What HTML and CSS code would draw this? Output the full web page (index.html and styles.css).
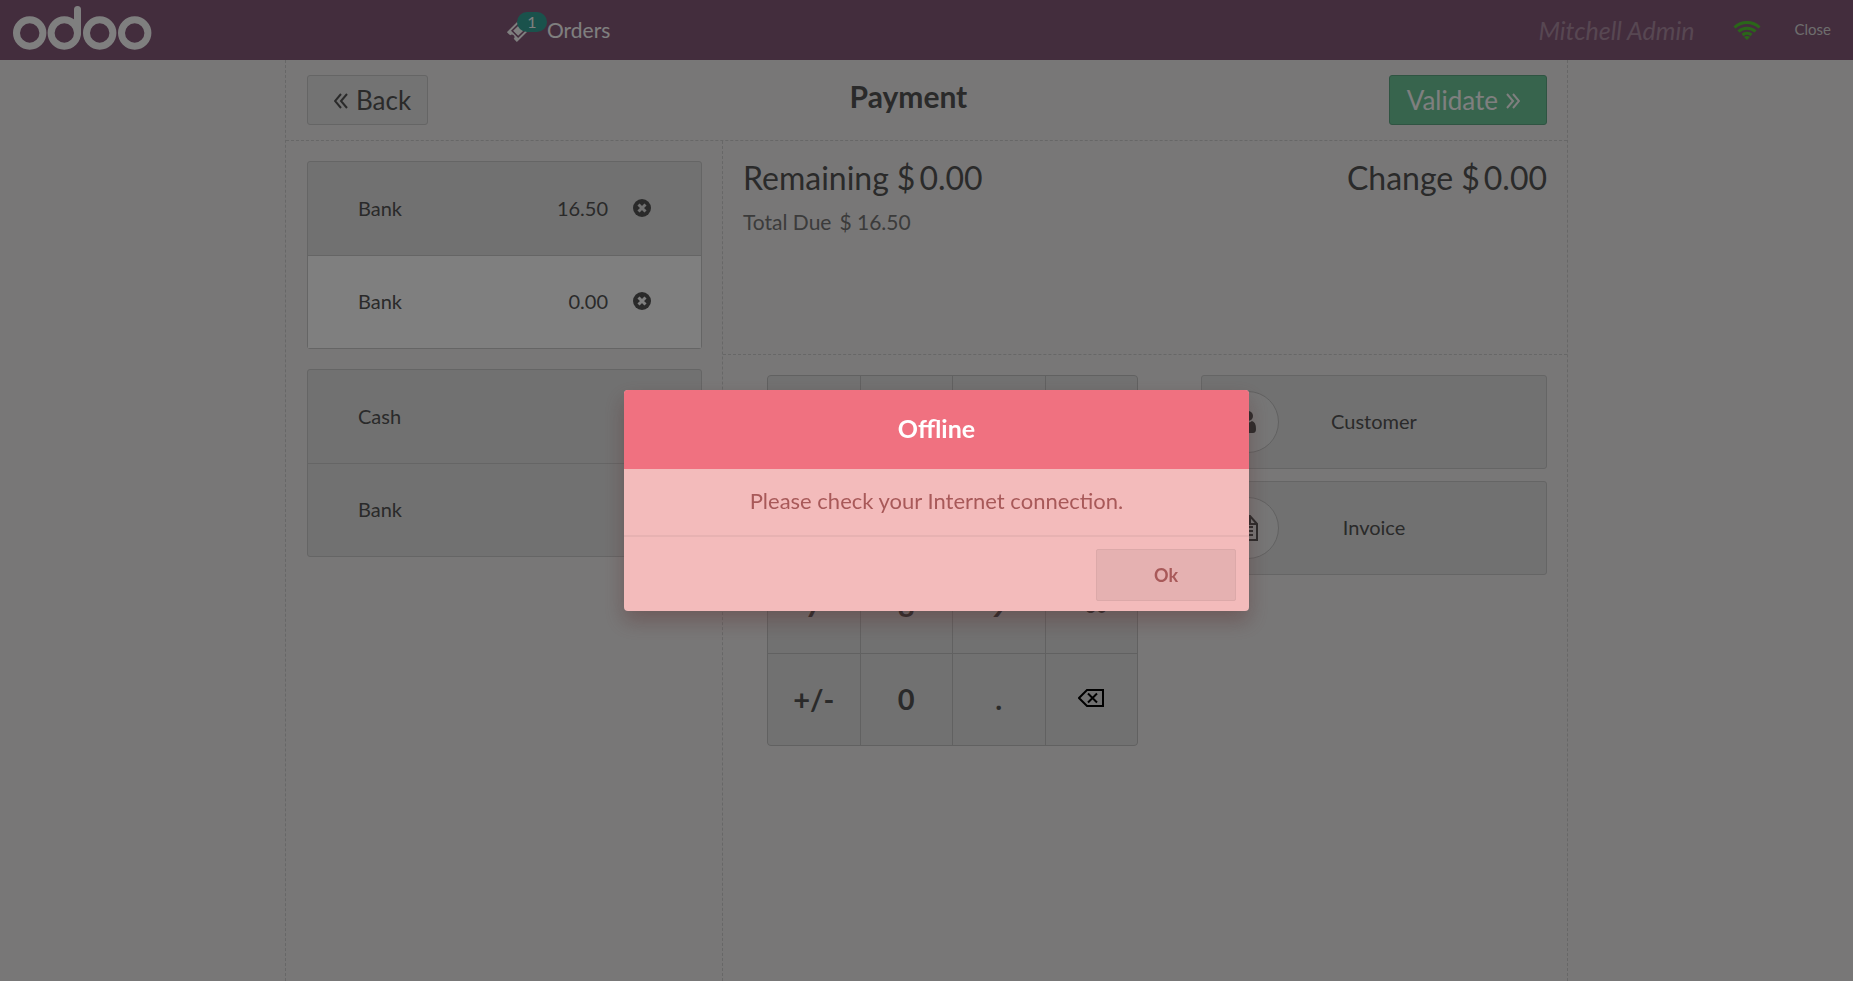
FILE: index.html
```html
<!DOCTYPE html>
<html lang="en">
<head>
<meta charset="utf-8">
<title>Payment</title>
<link rel="stylesheet" href="styles.css">
</head>
<body>
<div class="pos">
  <header class="topbar">
    <div class="brand">
      <svg class="logo" viewBox="0 0 140 48" role="img" aria-label="odoo">
        <g fill="none" stroke="#fff" stroke-width="7">
          <circle cx="17.700" cy="27" r="13.200"/>
          <circle cx="52.300" cy="27" r="13.200"/>
          <circle cx="87.700" cy="27" r="13.200"/>
          <circle cx="122.700" cy="27" r="13.200"/>
          <path d="M65.500 3.500V27" stroke-linecap="round"/>
        </g>
      </svg>
    </div>
    <button class="orders" type="button">
      <span class="ticket">
        <svg viewBox="0 0 24 24" width="24" height="24" aria-hidden="true">
          <g transform="rotate(-45 12 12)">
            <path fill="#fff" d="M2 5h20v4.500a2.500 2.500 0 0 0 0 5V19H2v-4.500a2.500 2.500 0 0 0 0-5z"/>
            <path fill="none" stroke="#875a7b" stroke-width="1.500" d="M6.500 7.700h11v8.600h-11z"/>
          </g>
        </svg>
        <span class="count">1</span>
      </span>
      <span>Orders</span>
    </button>
    <div class="status">
      <span class="cashier">Mitchell Admin</span>
      <svg class="wifi" viewBox="0 0 28 20" width="28" height="20" role="img" aria-label="Connected">
        <g fill="none" stroke="#5c3" stroke-width="3">
          <path d="M1.500 7.500a18 18 0 0 1 25 0"/>
          <path d="M5.500 11.500a12.500 12.500 0 0 1 17 0"/>
          <path d="M9.500 15a7 7 0 0 1 9 0"/>
        </g>
        <path fill="#5c3" d="M14 20l-3-3q3-2 6 0z"/>
      </svg>
      <button class="close" type="button">Close</button>
    </div>
  </header>

  <main class="payment">
    <div class="heading">
      <button class="nav back" type="button">
        <svg viewBox="0 0 14 16" width="14" height="16" aria-hidden="true"><path d="M7 1L1 8l6 7M13 1L7 8l6 7"/></svg>
        Back
      </button>
      <h1>Payment</h1>
      <button class="nav validate" type="button">
        Validate
        <svg viewBox="0 0 14 16" width="14" height="16" aria-hidden="true"><path d="M1 1l6 7-6 7M7 1l6 7-6 7"/></svg>
      </button>
    </div>
    <div class="columns">
      <section class="left" aria-label="Payment lines">
        <ul class="list">
          <li class="row">
            <span>Bank</span><span class="amount">16.50</span>
            <button class="remove" type="button" aria-label="Remove line">
              <svg viewBox="0 0 18 18" width="18" height="18"><circle cx="9" cy="9" r="9" fill="#555"/><path d="M5.500 5.500l7 7M12.500 5.500l-7 7" stroke="#e2e2e2" stroke-width="3"/></svg>
            </button>
          </li>
          <li class="row selected">
            <span>Bank</span><span class="amount">0.00</span>
            <button class="remove" type="button" aria-label="Remove line">
              <svg viewBox="0 0 18 18" width="18" height="18"><circle cx="9" cy="9" r="9" fill="#555"/><path d="M5.500 5.500l7 7M12.500 5.500l-7 7" stroke="#fff" stroke-width="3"/></svg>
            </button>
          </li>
        </ul>
        <div class="list">
          <button class="row" type="button">Cash</button>
          <button class="row" type="button">Bank</button>
        </div>
      </section>
      <section class="right" aria-label="Payment details">
        <div class="totals">
          <div>
            <div class="big"><span>Remaining</span><span class="money"><span>$</span><span>0.00</span></span></div>
            <div class="due"><span>Total Due</span><span>$ 16.50</span></div>
          </div>
          <div class="big"><span>Change</span><span class="money"><span>$</span><span>0.00</span></span></div>
        </div>
        <div class="controls">
          <div class="numpad">
            <button type="button">1</button><button type="button">2</button><button type="button">3</button><button class="mode" type="button">+10</button>
            <button type="button">4</button><button type="button">5</button><button type="button">6</button><button class="mode" type="button">+20</button>
            <button type="button">7</button><button type="button">8</button><button type="button">9</button><button class="mode" type="button">+50</button>
            <button type="button">+/-</button><button type="button">0</button><button type="button">.</button>
            <button type="button" aria-label="Backspace">
              <svg viewBox="0 0 26 18" width="26" height="18"><path fill="none" stroke="#000" stroke-width="2" d="M1 9l8-8h16v16H9zM10 4.500l9 9M19 4.500l-9 9"/></svg>
            </button>
          </div>
          <div class="options">
            <button class="option" type="button">
              <span class="disc"><svg viewBox="0 0 16 22" width="16" height="22"><circle cx="8" cy="5" r="5" fill="#555"/><path fill="#555" d="M4 10q4 3 8 0 4 1 4 8 0 4-3 4H3q-3 0-3-4 0-7 4-8z"/></svg></span>
              <span class="caption">Customer</span>
            </button>
            <button class="option" type="button">
              <span class="disc"><svg viewBox="0 0 20 26" width="20" height="26" fill="none" stroke="#555" stroke-width="2"><path d="M1 1h11l7 8v16H1zM12 1v8h7M5 12h10M5 16h10M5 20h10"/></svg></span>
              <span class="caption">Invoice</span>
            </button>
          </div>
        </div>
      </section>
    </div>
  </main>
</div>

<div class="overlay">
  <div class="popup" role="alertdialog" aria-labelledby="popup-title" aria-describedby="popup-text">
    <h2 id="popup-title">Offline</h2>
    <p id="popup-text">Please check your Internet connection.</p>
    <footer><button type="button">Ok</button></footer>
  </div>
</div>
</body>
</html>
```
FILE: styles.css
```css
* { box-sizing: border-box; }

body {
  margin: 0;
  font-family: Lato, "Open Sans", sans-serif;
  font-size: 20px;
  color: #555;
  background: #f0eeee;
}

button {
  font: inherit;
  color: inherit;
  background: none;
  border: 0;
  padding: 0;
  cursor: pointer;
}

svg { display: block; flex: none; }

.pos {
  display: flex;
  flex-direction: column;
  min-height: 100vh;
}

.topbar {
  display: grid;
  grid-template-columns: 507px auto 1fr;
  align-items: center;
  height: 60px;
  background: #875a7b;
  color: #fff;
}

.brand { padding-left: 12px; }
.logo { width: 140px; height: 48px; }

.orders {
  display: flex;
  align-items: center;
  gap: 16px;
  font-size: 21px;
  line-height: 24px;
}

.ticket { position: relative; }

.count {
  position: absolute;
  top: -6px;
  left: 10px;
  width: 30px;
  height: 20px;
  border-radius: 10px;
  background: #35a599;
  font-size: 16px;
  line-height: 20px;
}

.status {
  display: flex;
  align-items: center;
  justify-content: flex-end;
  padding-right: 22px;
}

.cashier {
  margin-right: 38px;
  font-size: 25px;
  font-style: italic;
  color: #af8fa5;
}

.wifi { margin-right: 34px; }

.close {
  padding-bottom: 2px;
  font-size: 15px;
  color: #dcdcdc;
}

.payment {
  flex: 1;
  display: flex;
  flex-direction: column;
  width: 100%;
  max-width: 1283px;
  margin: 0 auto;
  border: dashed #cecece;
  border-width: 0 1px;
}

.heading {
  display: flex;
  align-items: center;
  justify-content: space-between;
  height: 81px;
  padding: 0 20px 0 21px;
  border-bottom: 1px dashed #cecece;
}

.heading h1 {
  margin: 0 0 8px;
  font-size: 30px;
  line-height: 36px;
}

.nav {
  display: flex;
  align-items: center;
  gap: 8px;
  height: 50px;
  border: 1px solid #cacaca;
  border-radius: 3px;
  background: #e6e6e6;
  font-size: 26px;
}

.nav svg {
  margin-top: 2px;
  fill: none;
  stroke: currentColor;
  stroke-width: 2;
}

.back { padding: 0 16px 0 26px; }

.validate {
  padding: 0 26px 0 17px;
  border-color: #5fa885;
  background: #6ec89b;
  color: #fff;
}

.columns {
  flex: 1;
  display: grid;
  grid-template-columns: 436px 1fr;
}

.left {
  display: flex;
  flex-direction: column;
  gap: 20px;
  padding: 20px 20px 20px 21px;
}

.list {
  display: flex;
  flex-direction: column;
  margin: 0;
  padding: 0;
  list-style: none;
  border: 1px solid #cacaca;
  border-radius: 3px;
  background: #e2e2e2;
}

.row {
  display: flex;
  align-items: center;
  height: 93px;
  padding: 0 50px 2px;
}

.row + .row { border-top: 1px solid #cacaca; }
.selected { background: #fff; }
.amount { margin-left: auto; }
.remove { margin-left: 25px; }

.right { border-left: 1px dashed #cecece; }

.totals {
  display: flex;
  justify-content: space-between;
  height: 214px;
  padding: 18px 20px;
  border-bottom: 1px dashed #cecece;
}

.big, .due, .money { display: flex; }

.big {
  gap: 8px;
  font-size: 32px;
  line-height: 38px;
}

.money { gap: 4px; }

.due {
  gap: 8px;
  margin-top: 12px;
  font-size: 21px;
  line-height: 26px;
  color: #777;
}

.controls {
  display: flex;
  justify-content: space-between;
  align-items: flex-start;
  padding: 20px 20px 0 44px;
}

.numpad {
  display: grid;
  grid-template: repeat(4, 1fr) / repeat(4, 1fr);
  gap: 1px;
  width: 371px;
  aspect-ratio: 1;
  border: 1px solid #c2c2c2;
  border-radius: 4px;
  background: #c2c2c2;
  overflow: hidden;
}

.numpad button {
  display: flex;
  align-items: center;
  justify-content: center;
  padding-bottom: 2px;
  background: #e2e2e2;
  font-size: 29px;
  font-weight: bold;
}

.numpad .mode { font-size: 18px; }

.options {
  display: flex;
  flex-direction: column;
  gap: 12px;
  width: 346px;
}

.option {
  display: grid;
  grid-template-columns: 62px 1fr 62px;
  align-items: center;
  height: 94px;
  padding: 0 15px;
  border: 1px solid #cacaca;
  border-radius: 3px;
  background: #e2e2e2;
}

.caption { padding-bottom: 2px; }

.disc {
  display: flex;
  align-items: center;
  justify-content: center;
  height: 62px;
  border: 1px solid #c2c2c2;
  border-radius: 50%;
  background: #ececec;
}

.overlay {
  position: fixed;
  inset: 0;
  display: flex;
  align-items: center;
  justify-content: center;
  padding: 20px 0 0 20px;
  background: rgba(0, 0, 0, 0.5);
}

.popup {
  width: 625px;
  border-radius: 4px;
  background: #f3bbbb;
  box-shadow: 0 10px 20px rgba(92, 51, 51, 0.4);
  color: #a85959;
  text-align: center;
  overflow: hidden;
}

.popup h2 {
  margin: 0;
  padding-bottom: 2px;
  background: #f07180;
  color: #fff;
  font-size: 25px;
  line-height: 77px;
}

.popup p {
  margin: 0;
  padding-bottom: 2px;
  border-bottom: 2px solid #e7b2b2;
  font-size: 22px;
  line-height: 64px;
}

.popup footer {
  display: flex;
  justify-content: flex-end;
  padding: 12px 13px 10px;
}

.popup button {
  width: 140px;
  height: 52px;
  border: 1px solid #dca9a9;
  border-radius: 2px;
  background: #e5b1b1;
  font-size: 18px;
  font-weight: bold;
}
```
